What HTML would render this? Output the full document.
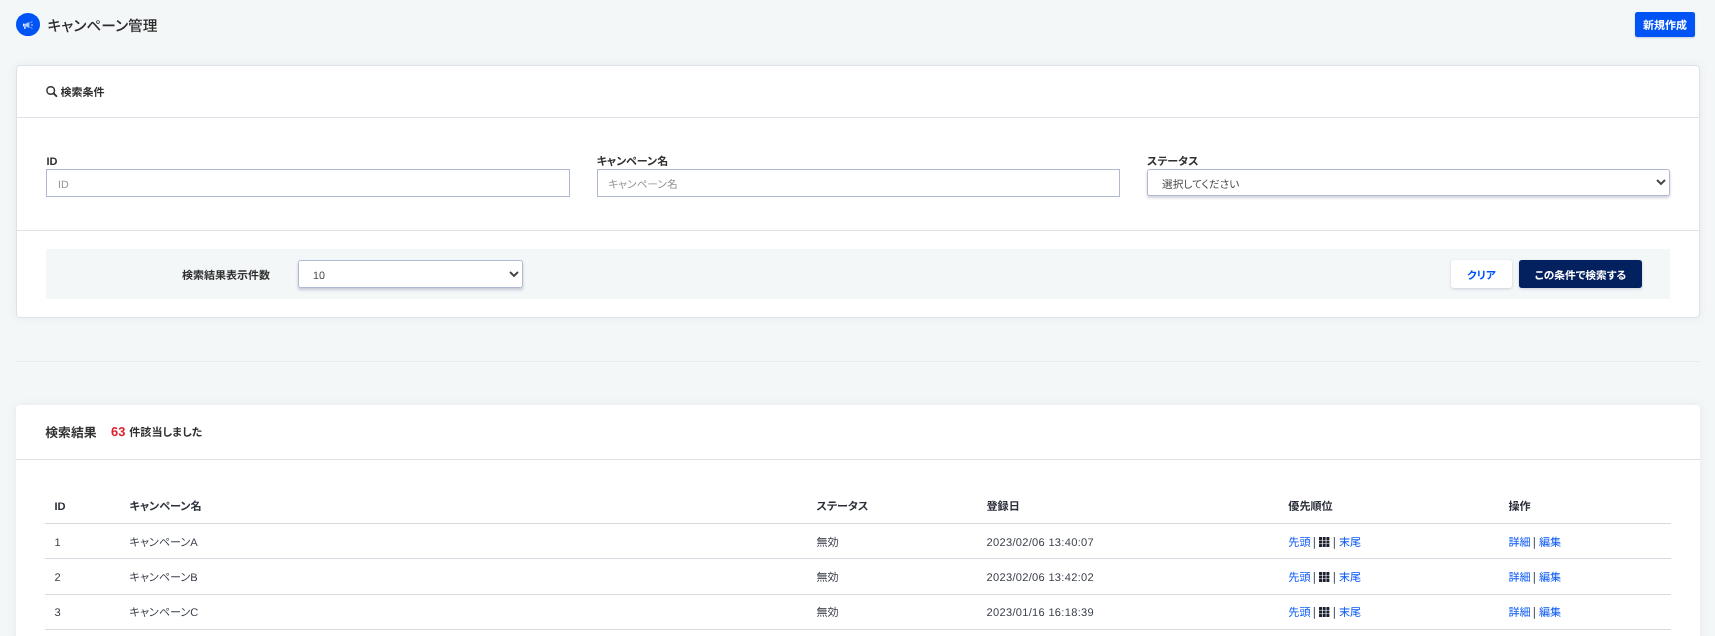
<!DOCTYPE html>
<html lang="ja">
<head>
<meta charset="utf-8">
<title>キャンペーン管理</title>
<style>
*{box-sizing:border-box;margin:0;padding:0}
html,body{width:1715px;height:636px;overflow:hidden}
body{background:#f4f7f8;font-family:"Liberation Sans","Noto Sans CJK JP",sans-serif;font-size:11px;color:#2b2b2b;position:relative;font-feature-settings:"palt";text-rendering:geometricPrecision}
.abs{position:absolute}
.layer{position:absolute;left:0;top:0;width:1715px;height:636px;will-change:transform}
svg{display:block;overflow:visible}
.title-ic{left:16px;top:13px;width:24px;height:23px;border-radius:50%;background:#0054f6}
.title{left:47.5px;top:16px;font-size:14.7px;font-weight:500;line-height:22px;color:#2c2c2c;white-space:nowrap}
.btn-new{left:1635px;top:12px;width:60px;height:25px;background:#0054f6;color:#fff;border-radius:2.5px;font-size:11px;font-weight:700;line-height:22px;padding-top:3px;text-align:center;box-shadow:0 1px 2px rgba(0,40,140,.2)}
.card1{left:16px;top:65px;width:1684px;height:253px;background:#fff;border:1px solid #dee0ea;border-radius:4px;box-shadow:0 0 8px rgba(100,110,125,.09)}
.sep{height:1px;background:#dfe0ea}
.lbl{font-weight:700;font-size:11px;line-height:14px;color:#303030;white-space:nowrap}
.inp{height:28px;border:1px solid #b0b8d2;background:#fff;color:#949494;font-size:10.7px;line-height:22px;padding-top:4px;padding-left:10.3px;white-space:nowrap}
.sel{border:1px solid #b0b8d2;border-radius:2.5px;background:#fff;color:#4a4a4a;font-size:10.7px;line-height:22px;padding-top:4px;padding-left:14px;box-shadow:0 2px 3px rgba(50,60,110,.24);white-space:nowrap}
.bar{left:46px;top:249px;width:1624px;height:50px;background:#f4f7f8}
.btn{height:28px;border-radius:3px;font-size:10.7px;font-weight:700;line-height:24px;padding-top:4.4px;text-align:center;box-shadow:0 1px 3px rgba(40,50,90,.2);white-space:nowrap}
.card2{left:16px;top:405px;width:1684px;height:240px;background:#fff;border-radius:4px 4px 0 0;box-shadow:0 0 8px rgba(100,110,125,.10)}
.th{font-weight:700;font-size:11.1px;line-height:14px;color:#2b2f3a;white-space:nowrap}
.td{font-size:11.1px;line-height:14px;color:#3a3f4a;white-space:nowrap}
.dt{letter-spacing:.3px}
.lnk{color:#0a58f5}
.pipe{font-size:12.4px;line-height:14px;color:#4a5060}
.rl{left:45px;width:1626px;height:1px;background:#d6dbe1}
</style>
</head>
<body>
<div class="layer">
<div class="abs title-ic"></div>
<svg class="abs" style="left:22px;top:20px" width="12" height="10" viewBox="22 20 12 10"><path d="M23.1 23.7h2.1l4.2-1.6v5.8l-4.2-1.6h-2.1z" fill="#fff" fill-opacity=".68"/><path d="M23.1 23.7h.9v2.6h-.9z" fill="#fff"/><path d="M24 26.4h1.7v2.3h-1.7z" fill="#fff" fill-opacity=".85"/><path d="M30.7 22.8l1.4-1.4M31.1 25h1.9M30.7 27.2l1.4 1.4" stroke="#fff" stroke-opacity=".85" stroke-width=".95" fill="none"/></svg>
<div class="abs title">キャンペーン管理</div>
<div class="abs btn-new">新規作成</div>
<div class="abs card1"></div>
<svg class="abs" style="left:46px;top:86px" width="12" height="12" viewBox="46 86 12 12"><circle cx="50.7" cy="90.5" r="3.8" fill="none" stroke="#333" stroke-width="1.5"/><path d="M53.7 93.5L56.4 96.2" stroke="#333" stroke-width="1.9" stroke-linecap="round"/></svg>
<div class="abs lbl" style="left:60.5px;top:85.8px">検索条件</div>
<div class="abs sep" style="left:17px;top:117px;width:1682px"></div>
<div class="abs lbl" style="left:46.5px;top:154.8px">ID</div>
<div class="abs inp" style="left:46px;top:169px;width:524px;padding-left:11.1px">ID</div>
<div class="abs lbl" style="left:596.7px;top:154.8px">キャンペーン名</div>
<div class="abs inp" style="left:597px;top:169px;width:523px">キャンペーン名</div>
<div class="abs lbl" style="left:1147px;top:154.8px">ステータス</div>
<div class="abs sel" style="left:1147px;top:169px;width:523px;height:26.5px">選択してください</div>
<svg class="abs" style="left:1656px;top:178.9px" width="10" height="6.4" viewBox="0 0 10 6.4"><path d="M1 1 L5 5 L9 1" fill="none" stroke="#444" stroke-width="1.9" stroke-linecap="butt" stroke-linejoin="miter"/></svg>
<div class="abs sep" style="left:17px;top:230px;width:1682px;background:#e2e2e5"></div>
<div class="abs bar"></div>
<div class="abs lbl" style="left:182px;top:268.5px">検索結果表示件数</div>
<div class="abs sel" style="left:298px;top:260px;width:225px;height:28px;padding-top:4.3px">10</div>
<svg class="abs" style="left:509px;top:271.2px" width="10" height="6.4" viewBox="0 0 10 6.4"><path d="M1 1 L5 5 L9 1" fill="none" stroke="#444" stroke-width="1.9" stroke-linecap="butt" stroke-linejoin="miter"/></svg>
<div class="abs btn" style="left:1451px;top:260px;width:61px;background:#fff;color:#0054f6">クリア</div>
<div class="abs btn" style="left:1519px;top:260px;width:123px;background:#03205f;color:#fff">この条件で検索する</div>
<div class="abs sep" style="left:16px;top:361px;width:1684px;background:#e8eaeb"></div>
<div class="abs card2"></div>
<div class="abs lbl" style="left:45.3px;top:425.5px;font-size:12.8px;font-weight:700;color:#333">検索結果</div>
<div class="abs lbl" style="left:111px;top:425.3px;font-size:12.9px;color:#d9222a">63</div>
<div class="abs lbl" style="left:129.3px;top:426.3px;font-size:11.05px">件該当しました</div>
<div class="abs sep" style="left:16px;top:459px;width:1684px;background:#e0e0e1"></div>
<div class="abs th" style="left:54.5px;top:499.5px">ID</div>
<div class="abs th" style="left:129.5px;top:499.5px">キャンペーン名</div>
<div class="abs th" style="left:816.5px;top:499.5px">ステータス</div>
<div class="abs th" style="left:986.5px;top:499.5px">登録日</div>
<div class="abs th" style="left:1288.3px;top:499.5px">優先順位</div>
<div class="abs th" style="left:1508.5px;top:499.5px">操作</div>
<div class="abs rl" style="top:523px"></div>
<div class="abs td" style="left:54.5px;top:535.8px">1</div>
<div class="abs td" style="left:129.5px;top:535.8px">キャンペーンA</div>
<div class="abs td" style="left:816.5px;top:535.8px">無効</div>
<div class="abs td dt" style="left:986.5px;top:535.8px">2023/02/06 13:40:07</div>
<div class="abs td lnk" style="left:1288.3px;top:535.8px">先頭</div>
<div class="abs td pipe" style="left:1312.7px;top:534.7px">|</div>
<svg class="abs" style="left:1318.8px;top:537.1px" width="10.4" height="10" viewBox="0 0 10.4 10" fill="#1c2130"><rect x="0" y="0" width="3" height="2.9" rx=".3"/><rect x="3.7" y="0" width="3" height="2.9" rx=".3"/><rect x="7.4" y="0" width="3" height="2.9" rx=".3"/><rect x="0" y="3.55" width="3" height="2.9" rx=".3"/><rect x="3.7" y="3.55" width="3" height="2.9" rx=".3"/><rect x="7.4" y="3.55" width="3" height="2.9" rx=".3"/><rect x="0" y="7.1" width="3" height="2.9" rx=".3"/><rect x="3.7" y="7.1" width="3" height="2.9" rx=".3"/><rect x="7.4" y="7.1" width="3" height="2.9" rx=".3"/></svg>
<div class="abs td pipe" style="left:1332.7px;top:534.7px">|</div>
<div class="abs td lnk" style="left:1339px;top:535.8px">末尾</div>
<div class="abs td lnk" style="left:1508.5px;top:535.8px">詳細</div>
<div class="abs td pipe" style="left:1532.8px;top:534.7px">|</div>
<div class="abs td lnk" style="left:1539px;top:535.8px">編集</div>
<div class="abs rl" style="top:558px"></div>
<div class="abs td" style="left:54.5px;top:571.0px">2</div>
<div class="abs td" style="left:129.5px;top:571.0px">キャンペーンB</div>
<div class="abs td" style="left:816.5px;top:571.0px">無効</div>
<div class="abs td dt" style="left:986.5px;top:571.0px">2023/02/06 13:42:02</div>
<div class="abs td lnk" style="left:1288.3px;top:571.0px">先頭</div>
<div class="abs td pipe" style="left:1312.7px;top:569.9px">|</div>
<svg class="abs" style="left:1318.8px;top:572.3px" width="10.4" height="10" viewBox="0 0 10.4 10" fill="#1c2130"><rect x="0" y="0" width="3" height="2.9" rx=".3"/><rect x="3.7" y="0" width="3" height="2.9" rx=".3"/><rect x="7.4" y="0" width="3" height="2.9" rx=".3"/><rect x="0" y="3.55" width="3" height="2.9" rx=".3"/><rect x="3.7" y="3.55" width="3" height="2.9" rx=".3"/><rect x="7.4" y="3.55" width="3" height="2.9" rx=".3"/><rect x="0" y="7.1" width="3" height="2.9" rx=".3"/><rect x="3.7" y="7.1" width="3" height="2.9" rx=".3"/><rect x="7.4" y="7.1" width="3" height="2.9" rx=".3"/></svg>
<div class="abs td pipe" style="left:1332.7px;top:569.9px">|</div>
<div class="abs td lnk" style="left:1339px;top:571.0px">末尾</div>
<div class="abs td lnk" style="left:1508.5px;top:571.0px">詳細</div>
<div class="abs td pipe" style="left:1532.8px;top:569.9px">|</div>
<div class="abs td lnk" style="left:1539px;top:571.0px">編集</div>
<div class="abs rl" style="top:594px"></div>
<div class="abs td" style="left:54.5px;top:606.1px">3</div>
<div class="abs td" style="left:129.5px;top:606.1px">キャンペーンC</div>
<div class="abs td" style="left:816.5px;top:606.1px">無効</div>
<div class="abs td dt" style="left:986.5px;top:606.1px">2023/01/16 16:18:39</div>
<div class="abs td lnk" style="left:1288.3px;top:606.1px">先頭</div>
<div class="abs td pipe" style="left:1312.7px;top:605.0px">|</div>
<svg class="abs" style="left:1318.8px;top:607.4px" width="10.4" height="10" viewBox="0 0 10.4 10" fill="#1c2130"><rect x="0" y="0" width="3" height="2.9" rx=".3"/><rect x="3.7" y="0" width="3" height="2.9" rx=".3"/><rect x="7.4" y="0" width="3" height="2.9" rx=".3"/><rect x="0" y="3.55" width="3" height="2.9" rx=".3"/><rect x="3.7" y="3.55" width="3" height="2.9" rx=".3"/><rect x="7.4" y="3.55" width="3" height="2.9" rx=".3"/><rect x="0" y="7.1" width="3" height="2.9" rx=".3"/><rect x="3.7" y="7.1" width="3" height="2.9" rx=".3"/><rect x="7.4" y="7.1" width="3" height="2.9" rx=".3"/></svg>
<div class="abs td pipe" style="left:1332.7px;top:605.0px">|</div>
<div class="abs td lnk" style="left:1339px;top:606.1px">末尾</div>
<div class="abs td lnk" style="left:1508.5px;top:606.1px">詳細</div>
<div class="abs td pipe" style="left:1532.8px;top:605.0px">|</div>
<div class="abs td lnk" style="left:1539px;top:606.1px">編集</div>
<div class="abs rl" style="top:629px"></div>
</div>
</body>
</html>
